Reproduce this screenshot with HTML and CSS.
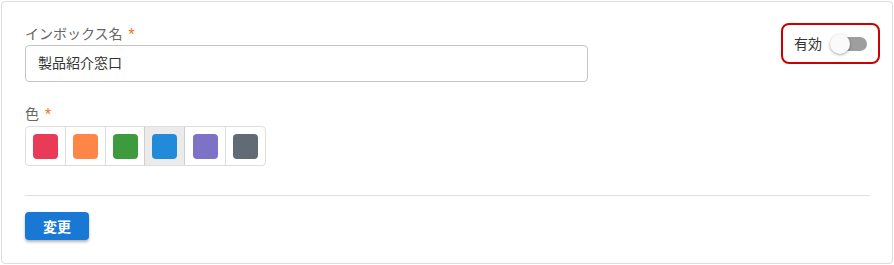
FILE: index.html
```html
<!DOCTYPE html>
<html lang="ja">
<head>
<meta charset="utf-8">
<link rel="stylesheet" href="styles.css">
</head>
<body>
<div class="card">
  <div class="top">
    <div class="form">
      <div class="field">
        <label class="label">インボックス名<span class="req">*</span></label>
        <div class="input">製品紹介窓口</div>
      </div>
      <div class="field field-color">
        <label class="label">色<span class="req">*</span></label>
        <div class="swatches">
          <div class="cell"><span class="sw red"></span></div>
          <div class="cell"><span class="sw orange"></span></div>
          <div class="cell"><span class="sw green"></span></div>
          <div class="cell selected"><span class="sw blue"></span></div>
          <div class="cell"><span class="sw purple"></span></div>
          <div class="cell"><span class="sw gray"></span></div>
        </div>
      </div>
    </div>
    <div class="toggle-box">
      <span class="toggle-label">有効</span>
      <span class="switch"><span class="track"></span><span class="knob"></span></span>
    </div>
  </div>
  <hr class="divider">
  <button class="btn">変更</button>
</div>
</body>
</html>
```
FILE: styles.css
```css
* { box-sizing: border-box; }
html, body { margin: 0; padding: 0; background: #fff; }
body {
  padding: 1px;
  font-family: Roboto, "Noto Sans CJK JP", sans-serif;
  font-size: 14px;
  color: #333;
}
.card {
  width: 892px;
  height: 263px;
  border: 1px solid #dcdcdc;
  border-radius: 4px;
  padding: 22px 22px 0 23px;
  display: flex;
  flex-direction: column;
}
.top {
  display: flex;
  justify-content: space-between;
  align-items: flex-start;
}
.form { width: 563px; }
.field { display: flex; flex-direction: column; }
.field-color { margin-top: 22px; }
.label {
  font-size: 14px;
  line-height: 20px;
  color: #666;
}
.req { color: #f5751f; margin-left: 6px; }
.input {
  margin-top: 1px;
  height: 37px;
  border: 1px solid #c4c4c4;
  border-radius: 4px;
  padding: 0 12px;
  font-size: 14px;
  line-height: 35px;
  color: #333;
}
.swatches {
  margin-top: 2px;
  display: flex;
  width: 241px;
  height: 40px;
  border: 1px solid #dedede;
  border-radius: 4px;
  overflow: hidden;
}
.cell {
  width: 40px;
  display: flex;
  align-items: center;
  justify-content: center;
  border-left: 1px solid #dedede;
}
.cell:first-child { border-left: none; width: 39px; }
.cell.selected { background: #ebebeb; border-left-color: #cfcfcf; border-right: 1px solid #cfcfcf; width: 41px; }
.cell.selected + .cell { border-left: none; }
.sw { width: 25px; height: 25px; border-radius: 4px; display: block; }
.red { background: #e93a58; }
.orange { background: #ff8646; }
.green { background: #3d9b3e; }
.blue { background: #218bda; }
.purple { background: #7d72c5; }
.gray { background: #616b76; }
.toggle-box {
  margin-top: -1px;
  margin-right: -10px;
  width: 99px;
  height: 41px;
  border: 2px solid #cc0000;
  border-radius: 8px;
  display: flex;
  align-items: center;
  padding: 0 11px;
}
.toggle-label { font-size: 14px; color: #333; line-height: 20px; }
.switch {
  position: relative;
  margin-left: 11px;
  width: 34px;
  height: 14px;
}
.track {
  display: block;
  width: 34px;
  height: 14px;
  border-radius: 7px;
  background: #9e9e9e;
}
.knob {
  position: absolute;
  left: -3px;
  top: -3px;
  width: 20px;
  height: 20px;
  border-radius: 50%;
  background: #fafafa;
  box-shadow: 0 1px 3px rgba(0,0,0,0.35);
}
.divider {
  margin: 29px 0 0 0;
  border: none;
  border-top: 1px solid #e0e0e0;
  height: 0;
  width: 845px;
}
.btn {
  margin-top: 16px;
  align-self: flex-start;
  height: 28px;
  width: 64px;
  border: none;
  border-radius: 4px;
  background: #1a78d5;
  color: #fff;
  font-family: Roboto, "Noto Sans CJK JP", sans-serif;
  font-weight: bold;
  font-size: 14px;
  box-shadow: 0 2px 3px rgba(0,0,0,0.3);
  padding: 0;
}
```
